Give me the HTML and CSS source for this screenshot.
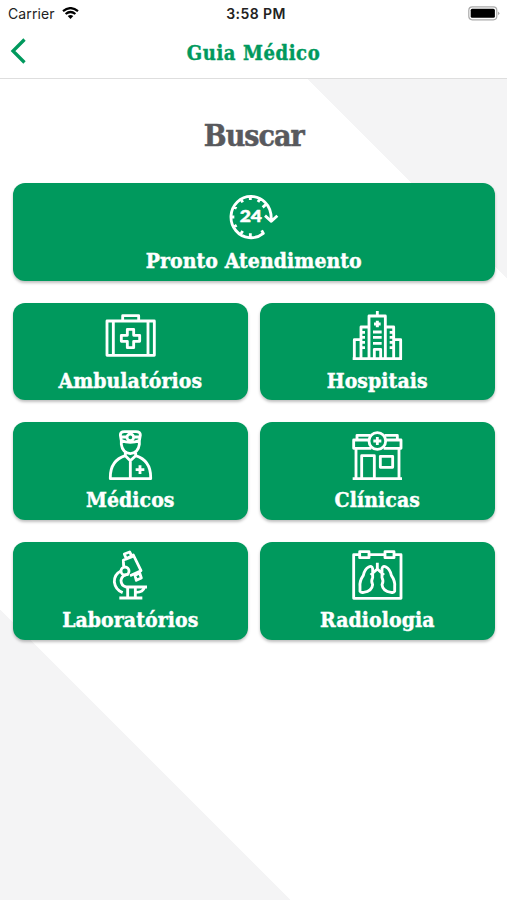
FILE: index.html
```html
<!DOCTYPE html>
<html lang="pt-BR">
<head>
<meta charset="utf-8">
<meta name="viewport" content="width=device-width">
<title>Guia Médico</title>
<link rel="stylesheet" href="styles.css">
</head>
<body>
<div class="status">
  <div class="carrier"><span>Carrier</span>
    <svg class="wifi" viewBox="0 0 17 12"><path d="M1 4.2Q8.500-2 16 4.200M3.600 7Q8.500 3 13.400 7" fill="none" stroke="#000" stroke-width="2.200"/><path d="M5.700 9Q8.500 6.800 11.300 9L8.500 12Z"/></svg>
  </div>
  <div class="time">3:58 PM</div>
  <svg class="battery" viewBox="0 0 32 15"><rect x=".8" y=".8" width="28" height="13" rx="3.500" fill="#fff" stroke="#aaa" stroke-width="1.200"/><rect x="2.700" y="2.800" width="24.200" height="9" rx="1.500"/><path d="M30.200 5.500Q32.500 7.300 30.200 9.200Z" fill="#999"/></svg>
</div>
<header class="nav">
  <svg class="back" viewBox="0 0 16 26"><path d="M14.500 1.500 3 13 14.500 24.500" fill="none" stroke="#00995d" stroke-width="3.300"/></svg>
  <h1 class="title">Guia Médico</h1>
</header>
<main class="content">
  <h2 class="heading">Buscar</h2>
  <div class="grid">
    <a class="card wide">
      <svg class="icon" viewBox="-3 0 240 195"><path d="M169 104Q170 68 150 49A60 62 0 1 0 145 142L140 133M106 31V42M77 38L83 49M135 38L129 48M55 62L65 67M152 56L143 64M47 93H58M55 124L65 118M77 145L83 135M106 154V142M150 89L169 106 187 89"/><text class="clock" x="74" y="109" textLength="67" lengthAdjust="spacingAndGlyphs">24</text></svg>
      <span class="label">Pronto Atendimento</span>
    </a>
    <a class="card">
      <svg class="icon" viewBox="0 0 240 195"><path d="M51 48H193V151H51ZM70 48V151M174 48V151M98 48V32H146V48M112 73H131V91H149V109H131V128H112V109H94V91H112Z"/></svg>
      <span class="label">Ambulatórios</span>
    </a>
    <a class="card">
      <svg class="icon" viewBox="-9 0 240 195"><path d="M38 161H186M43 161V104H63M63 161V66H86M87 161V33H136V161M137 66H161V161M162 104H182V161M112 18V33M103 161V133H122V161M66 82H75M66 97H75M66 112H75M66 128H75M158 82H149M158 97H149M158 112H149M158 128H149M99 81H125M99 97H125M99 115H125"/><path d="M112 47V67M102 57H122" stroke-width="9"/></svg>
      <span class="label">Hospitais</span>
    </a>
    <a class="card">
      <svg class="icon" viewBox="0 0 240 195"><path d="M94 47 91 30Q91 20 103 20H138Q151 20 151 30L148 47M93 36H109M133 36H149M94 47Q121 57 148 47M94 47V58Q97 83 121 86Q145 83 148 58V47M106 83V92L121 107 137 92V83M106 92Q61 106 61 157V161H182V157Q182 106 137 92M121 107V161M150 121V147M137 134H163"/><circle cx="121" cy="37" r="10"/></svg>
      <span class="label">Médicos</span>
    </a>
    <a class="card">
      <svg class="icon" viewBox="-9 0 240 195"><path d="M38 161H186M48 74V160M177 74V160M87 45H41V70H94M137 45H183V70H131M51 43V31H90M134 31H172V43M65 159V92H103V159M121 94H158V127H121ZM112 36V60M100 48H124"/><circle cx="112" cy="48" r="25"/></svg>
      <span class="label">Clínicas</span>
    </a>
    <a class="card">
      <svg class="icon" viewBox="0 0 240 195"><path d="M103 27 119 21 126 35 109 42ZM101 64 100 46 130 30 153 77 120 92M135 91 149 84 154 99 139 106ZM94 77Q72 88 73 111Q76 134 98 143M116 88Q96 88 93 106Q93 123 109 126H171M88 159H157M113 128V159M136 128V159M139 142Q159 142 163 128"/><circle cx="105" cy="78" r="12"/></svg>
      <span class="label">Laboratórios</span>
    </a>
    <a class="card">
      <svg class="icon" viewBox="-9 0 240 195"><path d="M57 29H41V160H183V29H164M59 20H87V38H59ZM135 20H162V38H135ZM88 29H134M112 53V72L92 90M112 72 132 90M98 85V71Q96 61 86 66Q74 72 70 91Q58 108 60 125V139Q62 144 71 142Q96 139 98 119Q92 109 98 98V85M126 85V71Q128 61 138 66Q150 72 154 91Q166 108 164 125V139Q162 144 153 142Q128 139 126 119Q132 109 126 98V85"/></svg>
      <span class="label">Radiologia</span>
    </a>
  </div>
</main>
</body>
</html>
```
FILE: styles.css
```css
* { box-sizing: border-box; }
body {
  margin: 0;
  height: 900px;
  overflow: hidden;
  background: #fff;
  font-family: "DejaVu Serif Condensed", "DejaVu Serif", serif;
  font-stretch: condensed;
}
.status {
  height: 27px;
  padding: 0 8px;
  display: grid;
  grid-template-columns: 1fr auto 1fr;
  align-items: center;
  font: 14px/27px Inter, sans-serif;
  color: #222;
}
.carrier { display: flex; align-items: center; gap: 7px; letter-spacing: .1px; }
.wifi { width: 17px; height: 12px; margin-top: -2px; }
.time { font-weight: 600; letter-spacing: .4px; padding-left: 5px; }
.battery { width: 32px; height: 15px; justify-self: end; margin-right: -1px; }
.nav {
  height: 52px;
  padding: 0 10px;
  display: grid;
  grid-template-columns: 16px 1fr 16px;
  align-items: center;
  border-bottom: 1px solid #dedede;
}
.back { width: 16px; height: 26px; margin-top: -3px; }
.title {
  margin: 0;
  text-align: center;
  font-size: 20px;
  letter-spacing: .6px;
  line-height: 50px;
  color: #00995d;
  -webkit-text-stroke: .4px #00995d;
}
.content {
  height: 821px;
  padding: 35px 12.500px 0 13px;
  background:
    linear-gradient(45deg, #f4f4f5 50%, transparent 50.200%) 0 100% / 290px 290px no-repeat,
    linear-gradient(225deg, #f4f4f5 50%, transparent 50.200%) 100% 0 / 199px 199px no-repeat;
}
.heading {
  margin: 0 0 25px;
  text-align: center;
  font-size: 30px;
  letter-spacing: -1px;
  line-height: 44px;
  color: #58595d;
  -webkit-text-stroke: .5px #58595d;
}
.grid {
  display: grid;
  grid-template-columns: 1fr 1fr;
  gap: 22.200px 12.500px;
}
.card {
  height: 97.500px;
  padding-top: 2.500px;
  display: flex;
  flex-direction: column;
  align-items: center;
  background: #00995d;
  border-radius: 12px;
  box-shadow: 0 2px 3px rgba(0, 0, 0, .25);
}
.wide { grid-column: 1 / -1; }
.icon {
  flex: none;
  width: 80px;
  height: 65px;
  fill: none;
  stroke: #fff;
  stroke-width: 8.500;
  stroke-linejoin: round;
}
.clock { fill: #fff; stroke: #fff; stroke-width: 1.500; font: 900 48px Lato, sans-serif; }
.label {
  margin-top: -2.500px;
  color: #fff;
  font-size: 21px;
  font-weight: 700;
  letter-spacing: .08px;
  line-height: 26px;
  white-space: nowrap;
  -webkit-text-stroke: .4px #fff;
}
```
